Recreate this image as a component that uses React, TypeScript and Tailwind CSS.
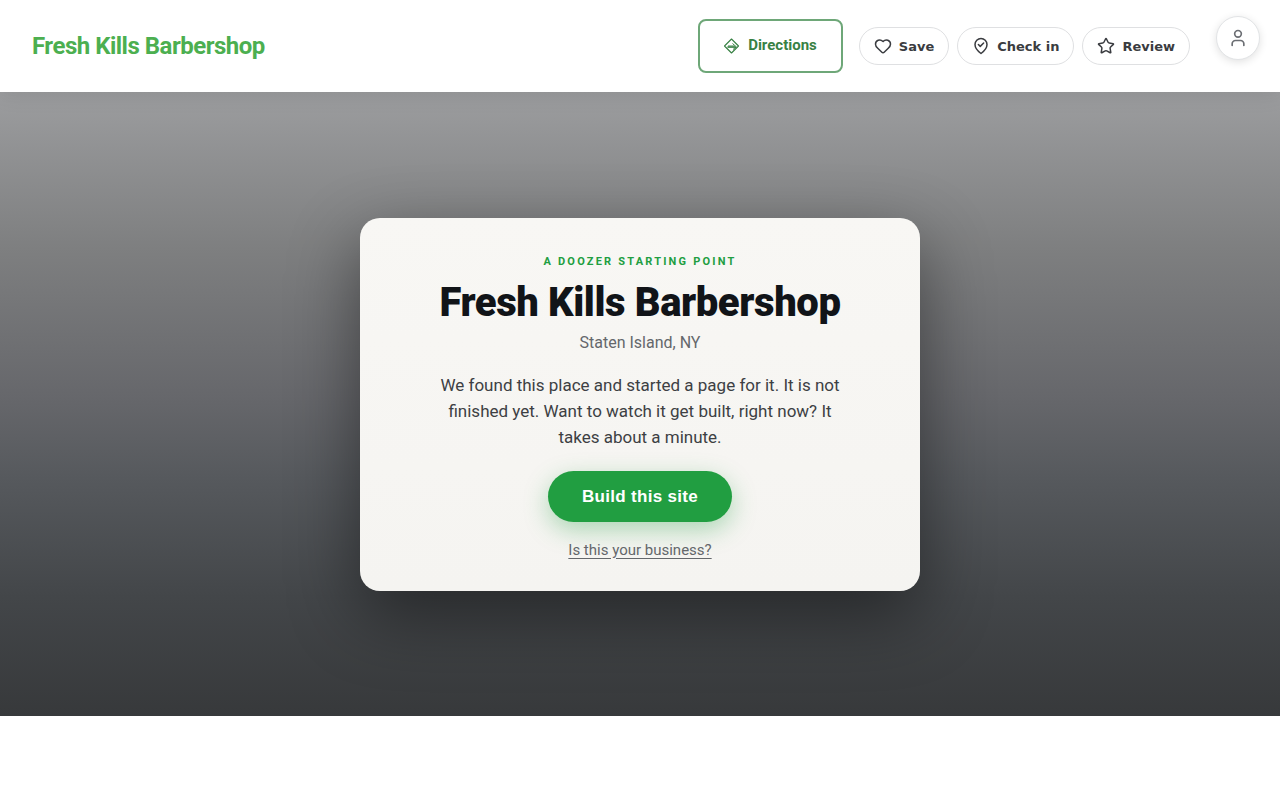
import type { ReactNode } from 'react';
import { Heart, Star, User } from 'lucide-react';

function DirectionsIcon() {
  return (
    <svg width="16" height="16" viewBox="0 0 16 16" fill="none" stroke="currentColor" aria-hidden="true">
      <path d="M7.500 1 14.500 8 7.500 15 .5 8Z" strokeWidth="1.100" strokeLinejoin="round" />
      <path d="M3.500 9h8" strokeWidth="1.700" />
      <path d="M8.500 5.500 12.300 8.800 9 11.500" strokeWidth="1" />
      <path d="M4 7.500h6" strokeWidth="0.500" />
    </svg>
  );
}

function CheckInIcon() {
  return (
    <svg
      width="18"
      height="18"
      viewBox="0 0 24 24"
      fill="none"
      stroke="currentColor"
      strokeWidth="2"
      strokeLinecap="round"
      strokeLinejoin="round"
      aria-hidden="true"
    >
      <path d="M20 10c0 6-8 12-8 12s-8-6-8-12a8 8 0 0 1 16 0Z" />
      <path d="m8.500 10 2.500 2.500 4.500-4.500" />
    </svg>
  );
}

function PillButton({ icon, label }: { icon: ReactNode; label: string }) {
  return (
    <button
      type="button"
      className="flex h-[38px] items-center gap-[7px] rounded-full border border-[#dfe0e2] bg-white px-3.5 font-['DejaVu_Sans',sans-serif] text-[13px] font-bold whitespace-nowrap text-[#3a3c40]"
    >
      {icon}
      <span className="pt-0.5">{label}</span>
    </button>
  );
}

function Header() {
  return (
    <header className="relative z-10 flex min-h-[92px] flex-wrap items-center justify-between gap-4 bg-white pr-[90px] pl-8 shadow-[0_2px_20px_rgba(0,0,0,0.1)]">
      <a href="#" className="text-2xl font-bold tracking-[-0.5px] text-[#4caf50]">
        Fresh Kills Barbershop
      </a>
      <div className="flex items-center gap-4">
        <a
          href="#directions"
          className="flex h-[54px] items-center gap-2 rounded-lg border-2 border-[#6ea778] px-6 text-[15px] font-bold text-[#388144]"
        >
          <DirectionsIcon />
          <span className="pb-0.5">Directions</span>
        </a>
        <div className="flex items-center gap-2">
          <PillButton icon={<Heart size={18} />} label="Save" />
          <PillButton icon={<CheckInIcon />} label="Check in" />
          <PillButton icon={<Star size={18} />} label="Review" />
        </div>
      </div>
      <button
        type="button"
        aria-label="Account"
        className="absolute top-4 right-5 flex size-11 items-center justify-center rounded-full border border-[#e2e4e6] bg-white text-[#6b6e73] shadow-[0_2px_8px_rgba(0,0,0,0.12)]"
      >
        <User size={20} strokeWidth={2} />
      </button>
    </header>
  );
}

function Hero() {
  return (
    <section className="flex min-h-[78vh] items-center justify-center overflow-hidden bg-[linear-gradient(180deg,#9c9d9f_0%,#7e7f80_25%,#66676b_49%,#56595d_62%,#434649_81%,#37393b_100%)] px-6">
      <div className="w-full max-w-[560px] rounded-[20px] bg-linear-to-b from-[#f8f7f4] to-[#f5f4f1] px-10 pt-[35px] pb-[29px] text-center shadow-[0_24px_70px_rgba(0,0,0,0.45)]">
        <p className="text-[11px] leading-[18px] font-bold tracking-[0.2em] text-[#219e41] uppercase">
          A Doozer starting point
        </p>
        <h1 className="mt-2 text-[40px] leading-[48px] font-black tracking-[-0.01em] text-[#111418]">
          Fresh Kills Barbershop
        </h1>
        <p className="mt-[3px] text-base leading-[26px] text-[#64676b]">Staten Island, NY</p>
        <p className="mx-auto mt-4 max-w-[420px] text-[17px] leading-[26px] text-[#3d4043]">
          We found this place and started a page for it. It is not finished yet. Want to watch it get built, right now?
          It takes about a minute.
        </p>
        <button
          type="button"
          className="mt-[21px] h-[51px] rounded-full bg-[#219e41] px-[34px] pt-px font-['Liberation_Sans',sans-serif] text-[17px] font-bold tracking-[0.3px] text-white shadow-[0_8px_24px_rgba(33,158,65,0.35)]"
        >
          Build this site
        </button>
        <div className="mt-4 leading-6">
          <a href="#claim" className="text-[15px] text-[#64676b] underline underline-offset-[3px]">
            Is this your business?
          </a>
        </div>
      </div>
    </section>
  );
}

export default function App() {
  return (
    <div className="min-h-screen bg-white font-['Roboto',sans-serif]">
      <Header />
      <main>
        <Hero />
      </main>
    </div>
  );
}
